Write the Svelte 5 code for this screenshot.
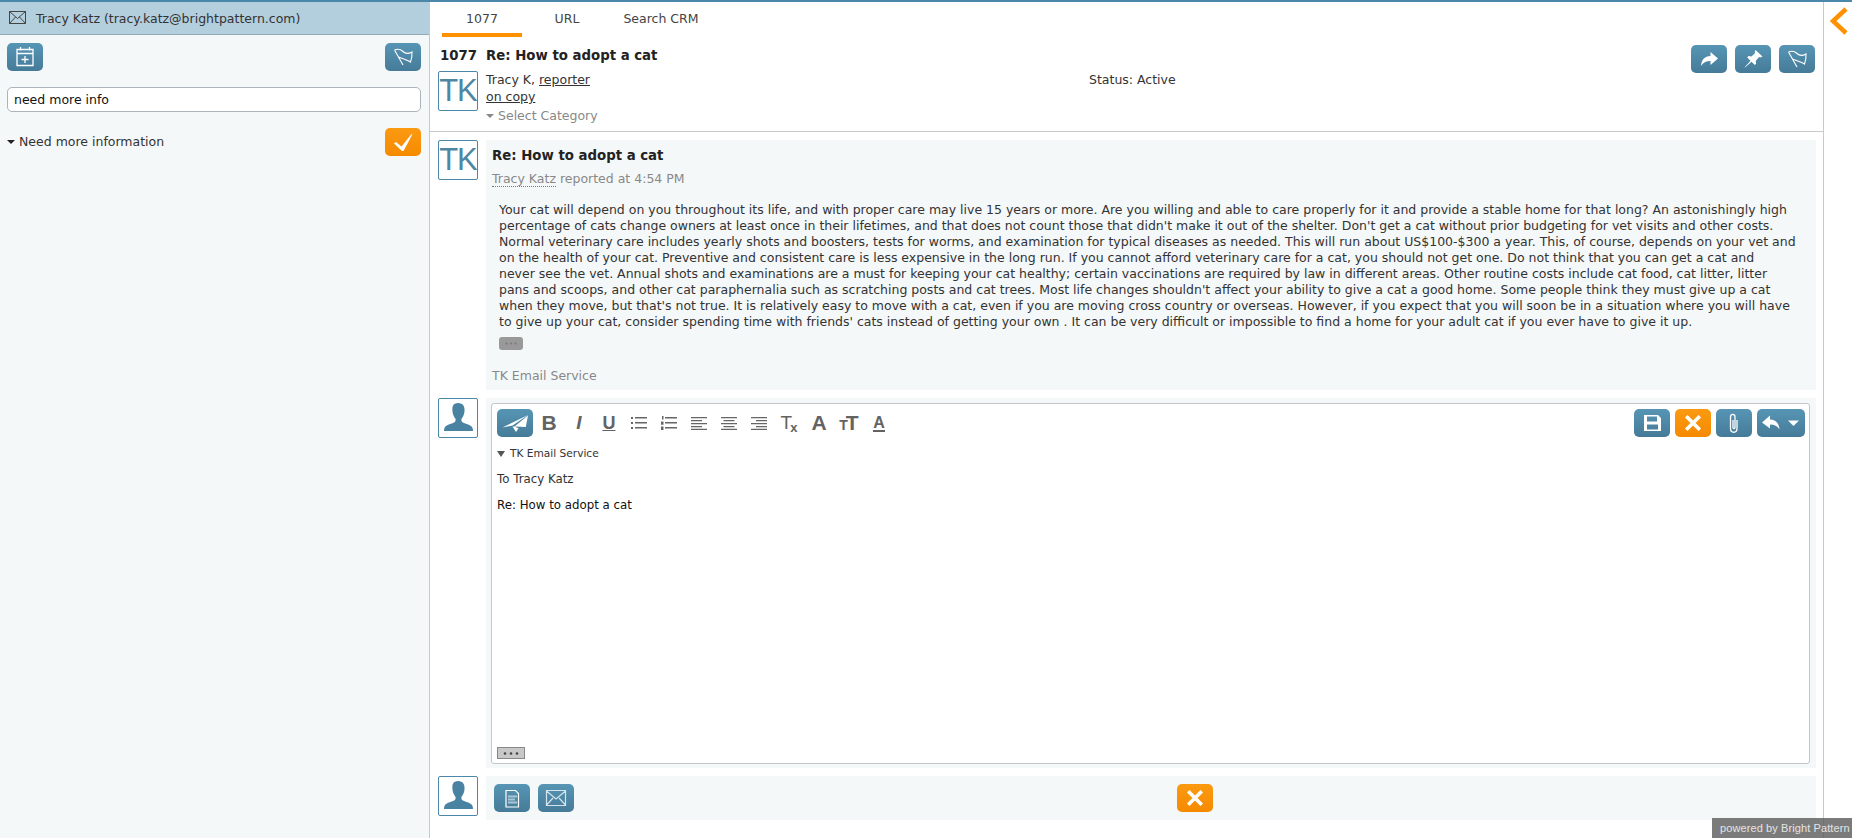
<script>
	const bodyLines = [
		'Your cat will depend on you throughout its life, and with proper care may live 15 years or more. Are you willing and able to care properly for it and provide a stable home for that long? An astonishingly high',
		"percentage of cats change owners at least once in their lifetimes, and that does not count those that didn't make it out of the shelter. Don't get a cat without prior budgeting for vet visits and other costs.",
		'Normal veterinary care includes yearly shots and boosters, tests for worms, and examination for typical diseases as needed. This will run about US$100-$300 a year. This, of course, depends on your vet and',
		'on the health of your cat. Preventive and consistent care is less expensive in the long run. If you cannot afford veterinary care for a cat, you should not get one. Do not think that you can get a cat and',
		'never see the vet. Annual shots and examinations are a must for keeping your cat healthy; certain vaccinations are required by law in different areas. Other routine costs include cat food, cat litter, litter',
		"pans and scoops, and other cat paraphernalia such as scratching posts and cat trees. Most life changes shouldn't affect your ability to give a cat a good home. Some people think they must give up a cat",
		"when they move, but that's not true. It is relatively easy to move with a cat, even if you are moving cross country or overseas. However, if you expect that you will soon be in a situation where you will have",
		"to give up your cat, consider spending time with friends' cats instead of getting your own . It can be very difficult or impossible to find a home for your adult cat if you ever have to give it up."
	];
</script>

{#snippet flag()}
	<svg width="36" height="28" viewBox="0 0 36 28" fill="none" stroke="#fff" stroke-width="1.100">
		<path d="M9.500 7 18 22M9.500 7C13 5.500 16 6.500 18 8.500c2 2 5.500 2.500 9 .5 .2 3.500-.3 7-1.500 10-2.500-2-6-2.500-12-5" />
	</svg>
{/snippet}

{#snippet person()}
	<div class="avatar">
		<svg width="38" height="38" viewBox="0 0 38 38" fill="#4a83a2">
			<path d="M19 4c5 0 7 3.500 6.500 8.500-.3 3-1.500 5.500-2.800 7-.6 1.500-.4 3 .8 3.800 2 1.300 8 2.500 9.500 4.700.8 1.200 1 2.500 1 4H5c0-1.500.2-2.800 1-4 1.500-2.200 7.500-3.400 9.500-4.700 1.200-.8 1.400-2.300.8-3.800-1.300-1.500-2.500-4-2.800-7C13 7.500 14 4 19 4z" />
		</svg>
	</div>
{/snippet}

{#snippet closeIcon()}
	<svg width="36" height="28" viewBox="0 0 36 28" stroke="#fff" stroke-width="3.600" stroke-linecap="square">
		<path d="M12.500 8.500 23.500 19.500M23.500 8.500 12.500 19.500" />
	</svg>
{/snippet}

<div class="app">
	<aside class="left">
		<div class="left-head">
			<svg width="18" height="14" viewBox="0 0 18 14" fill="none" stroke="#444" stroke-width="1">
				<path d="M.5.500h16v12H.500zM.5.500l8 7 8-7M.5 12.500l6-6.500M16.500 12.500l-6-6.500" />
			</svg>
			<span>Tracy Katz (tracy.katz@brightpattern.com)</span>
		</div>
		<div class="left-tools">
			<button class="btn">
				<svg width="36" height="28" viewBox="0 0 36 28" fill="none" stroke="#fff" stroke-width="1.300">
					<path d="M10 6.500h16v16H10zM10 10.500h16M13.500 4v3.500M22.500 4v3.500M18 13v7M14.500 16.500h7" />
				</svg>
			</button>
			<button class="btn">{@render flag()}</button>
		</div>
		<input class="search" value="need more info" />
		<div class="result">
			<span class="result-name"><i class="caret dark"></i>Need more information</span>
			<button class="btn orange">
				<svg width="36" height="28" viewBox="0 0 36 28" fill="#fff">
					<path d="M9 15.500l2-1.500 5.500 4.500L26.500 6l.8.6L18.500 23h-1.500z" />
				</svg>
			</button>
		</div>
	</aside>

	<main class="main">
		<nav class="tabs">
			<span class="tab active">1077</span>
			<span class="tab">URL</span>
			<span class="tab wide">Search CRM</span>
		</nav>

		<header class="head">
			<div class="head-main">
				<h1 class="case-title"><span class="case-no">1077</span>Re: How to adopt a cat</h1>
				<div class="head-row">
					<div class="avatar tk">TK</div>
					<div class="people">
						<div>Tracy K, <u>reporter</u></div>
						<div><u>on copy</u></div>
						<div class="category"><i class="caret"></i>Select Category</div>
					</div>
					<div class="status">Status: Active</div>
				</div>
			</div>
			<div class="head-actions">
				<button class="btn">
					<svg width="36" height="28" viewBox="0 0 36 28" fill="#fff">
						<path d="M27 13.500 19.500 7v4c-6 .3-9 3.800-9.500 10 2-3.500 5-5 9.500-5v4z" />
					</svg>
				</button>
				<button class="btn">
					<svg width="36" height="28" viewBox="0 0 36 28" fill="#fff">
						<path d="M20.500 5 27.500 11.500l-2.200 1-1.200-.4-3.300 3.600.3 3-1.300 1.300-3.300-3.300-6.500 5.800-.3-.3 5.800-6.500-3.300-3.300 1.300-1.300 3 .3 3.600-3.300-.4-1.200z" />
					</svg>
				</button>
				<button class="btn">{@render flag()}</button>
			</div>
		</header>

		<section class="thread">
			<div class="item">
				<div class="avatar tk">TK</div>
				<article class="message">
					<h2>Re: How to adopt a cat</h2>
					<div class="byline"><span class="dotted">Tracy Katz</span> reported at 4:54 PM</div>
					<div class="body">
						{#each bodyLines as line}
							<div>{line}</div>
						{/each}
					</div>
					<div class="more">
						<svg width="12" height="3" viewBox="0 0 12 3" fill="#777">
							<circle cx="1.500" cy="1.500" r="1" /><circle cx="6" cy="1.500" r="1" /><circle cx="10.500" cy="1.500" r="1" />
						</svg>
					</div>
					<div class="service">TK Email Service</div>
				</article>
			</div>

			<div class="item">
				{@render person()}
				<div class="compose">
					<div class="editor">
						<div class="toolbar">
							<button class="btn">
								<svg width="36" height="28" viewBox="0 0 36 28" fill="#fff">
									<path d="M5.500 18.500 31 6 15.500 16.500zM17.500 17.500 31 6.500 28.800 18zM15.500 17.500l3.500 5.500 2.500-3.700-4-1.800z" />
								</svg>
							</button>
							<div class="fmt">
								<span class="f"><b class="g-b">B</b></span>
								<span class="f"><em class="g-i">I</em></span>
								<span class="f"><span class="g-u">U</span></span>
								<span class="f">
									<svg width="16" height="14" viewBox="0 0 16 14" fill="#666">
										<path d="M0 1h2v2H0zM4 1h12v1.500H4zM0 6h2v2H0zM4 6h12v1.500H4zM0 11h2v2H0zM4 11h12v1.500H4z" />
									</svg>
								</span>
								<span class="f">
									<svg width="16" height="14" viewBox="0 0 16 14" fill="#666">
										<path d="M1 0h1.500v3.500H1zM0 5.500h2.500v3.200H0zM0 10.500h2.500V14H0zM4 1h12v1.500H4zM4 6h12v1.500H4zM4 11h12v1.500H4z" />
									</svg>
								</span>
								<span class="f">
									<svg width="16" height="14" viewBox="0 0 16 14" fill="#666">
										<path d="M0 1h16v1.300H0zM0 4h11v1.300H0zM0 7h16v1.300H0zM0 10h11v1.300H0zM0 12.700h16V14H0z" />
									</svg>
								</span>
								<span class="f">
									<svg width="16" height="14" viewBox="0 0 16 14" fill="#666">
										<path d="M0 1h16v1.300H0zM2.500 4h11v1.300h-11zM0 7h16v1.300H0zM2.500 10h11v1.300h-11zM0 12.700h16V14H0z" />
									</svg>
								</span>
								<span class="f">
									<svg width="16" height="14" viewBox="0 0 16 14" fill="#666">
										<path d="M0 1h16v1.300H0zM5 4h11v1.300H5zM0 7h16v1.300H0zM5 10h11v1.300H5zM0 12.700h16V14H0z" />
									</svg>
								</span>
								<span class="f"><span class="g-t">T<sub>x</sub></span></span>
								<span class="f"><b class="g-a">A</b></span>
								<span class="f"><span class="g-tt"><small>T</small>T</span></span>
								<span class="f"><span class="g-ac">A</span></span>
							</div>
							<div class="editor-actions">
								<button class="btn">
									<svg width="36" height="28" viewBox="0 0 36 28" fill="#fff">
										<path fill-rule="evenodd" d="M10 6h14l3 3v13H10zM13 7.500v5h10v-5zM13 15.500v5h11v-5z" />
									</svg>
								</button>
								<button class="btn orange">{@render closeIcon()}</button>
								<button class="btn">
									<svg width="36" height="28" viewBox="0 0 36 28" fill="none" stroke="#fff" stroke-width="1.300">
										<path d="M21 11v8.500c0 5-6.500 5-6.500 0V8c0-3.500 4.500-3.500 4.500 0v10.500c0 1.500-2 1.500-2 0V11" />
									</svg>
								</button>
								<button class="btn reply">
									<svg width="48" height="28" viewBox="0 0 48 28" fill="#fff">
										<path d="M5 13.500 13 6.500v4c6 .3 9 3.800 9.500 10-2-3.500-5-5-9.500-5v4zM31 11.500h11l-5.500 5.500z" />
									</svg>
								</button>
							</div>
						</div>
						<div class="from"><i class="caret large"></i>TK Email Service</div>
						<div class="to">To Tracy Katz</div>
						<div class="subject">Re: How to adopt a cat</div>
						<div class="editor-spacer"></div>
						<div class="quote-toggle">
							<svg width="16" height="3" viewBox="0 0 16 3" fill="#444">
								<circle cx="2" cy="1.500" r="1.300" /><circle cx="8" cy="1.500" r="1.300" /><circle cx="14" cy="1.500" r="1.300" />
							</svg>
						</div>
					</div>
				</div>
			</div>

			<div class="item">
				{@render person()}
				<div class="footer-bar">
					<div class="footer-left">
						<button class="btn">
							<svg width="36" height="28" viewBox="0 0 36 28" fill="none" stroke="#fff" stroke-width="1.200">
								<path d="M12 6.500h9.500l3 3v13.500H12z" />
								<path d="M14 11.500h9v2h-9zM14 14.500h7v2h-7zM14 17.500h9v2h-9z" fill="#a9c8d8" stroke="none" />
							</svg>
						</button>
						<button class="btn">
							<svg width="36" height="28" viewBox="0 0 36 28" fill="none" stroke="#d5e4ec" stroke-width="1.200">
								<path d="M8.500 6.500h19v15h-19zM8.500 7l9.500 8 9.500-8M8.500 21l6.500-7M27.500 21 21 14" />
							</svg>
						</button>
					</div>
					<button class="btn orange cancel">{@render closeIcon()}</button>
				</div>
			</div>
		</section>
	</main>

	<aside class="rail">
		<svg width="18" height="28" viewBox="0 0 18 28" fill="none" stroke="#ff9000" stroke-width="4.500">
			<path d="M16 2 3 14l13 12" />
		</svg>
	</aside>

	<div class="powered">powered by Bright Pattern</div>
</div>

<style>
	:global(body) {
		background: #fff;
		color: #333;
		font-family: 'DejaVu Sans', sans-serif;
	}
	.app {
		display: flex;
		height: 838px;
		box-sizing: border-box;
		border-top: 2px solid #4a87a8;
		overflow: hidden;
		position: relative;
		font-size: 12.500px;
	}
	.btn {
		display: block;
		width: 36px;
		height: 28px;
		padding: 0;
		border: 0;
		border-radius: 5px;
		background: linear-gradient(#5795b5, #457b98);
		flex: none;
	}
	.btn svg {
		display: block;
	}
	.btn.orange {
		background: linear-gradient(#fb9a12, #f58a00);
	}
	.caret {
		display: inline-block;
		width: 0;
		height: 0;
		border: 4px solid transparent;
		border-top: 4px solid #888;
		border-bottom: 0;
		margin-right: 4px;
		vertical-align: 2px;
	}
	.caret.dark {
		border-top-color: #222;
	}
	.caret.large {
		border-width: 4px;
		border-top: 6px solid #555;
		border-bottom: 0;
		margin-right: 5px;
		vertical-align: 0;
	}

	.left {
		flex: none;
		box-sizing: border-box;
		border-right: 1px solid #c9c9c9;
		width: 430px;
		background: #f5f8f9;
	}
	.left-head {
		height: 33px;
		box-sizing: border-box;
		display: flex;
		align-items: center;
		gap: 9px;
		padding-left: 9px;
		background: #b3cedd;
		border-bottom: 1px solid #94a9b6;
		white-space: nowrap;
	}
	.left-tools {
		display: flex;
		justify-content: space-between;
		padding: 8px 8px 0 7px;
	}
	.search {
		display: block;
		box-sizing: border-box;
		width: 414px;
		height: 25px;
		margin: 16px 0 0 7px;
		padding: 0 6px;
		border: 1px solid #aab4ba;
		border-radius: 5px;
		background: #fff;
		color: #111;
		font: inherit;
	}
	.result {
		display: flex;
		justify-content: space-between;
		padding: 16px 8px 0 7px;
	}
	.result-name {
		padding-top: 6px;
	}

	.main {
		flex: 1;
		min-width: 0;
	}
	.tabs {
		display: flex;
		height: 35px;
		box-sizing: border-box;
		padding-left: 12px;
	}
	.tab {
		width: 80px;
		text-align: center;
		padding-top: 9px;
		color: #444;
	}
	.tab.wide {
		width: 104px;
		margin-left: 2px;
	}
	.tab.active {
		border-bottom: 4px solid #ff9000;
		margin-right: 5px;
	}
	.head {
		display: flex;
		height: 95px;
		box-sizing: border-box;
		border-bottom: 1px solid #c9c9c9;
		padding-right: 8px;
	}
	.head-main {
		flex: 1;
	}
	.case-title {
		margin: 0;
		height: 34px;
		box-sizing: border-box;
		padding: 11px 0 0 10px;
		font-size: 13.300px;
		line-height: 16px;
		color: #222;
		white-space: nowrap;
	}
	.case-no {
		display: inline-block;
		width: 46px;
	}
	.head-row {
		display: flex;
		padding-left: 8px;
	}
	.avatar {
		width: 40px;
		height: 40px;
		box-sizing: border-box;
		flex: none;
		border: 1px solid #4a87a8;
		border-radius: 2px;
		background: #fff;
		overflow: hidden;
	}
	.avatar.tk {
		font-family: 'Liberation Sans', sans-serif;
		font-size: 31px;
		line-height: 38px;
		letter-spacing: -1px;
		text-align: center;
		color: #4f87a3;
	}
	.people {
		width: 603px;
		padding-left: 8px;
		line-height: 17px;
	}
	.category {
		margin-top: 2px;
		color: #888;
	}
	.status {
		line-height: 17px;
	}
	.head-actions {
		display: flex;
		gap: 8px;
		padding-top: 8px;
	}

	.thread {
		padding: 8px 7px 0 8px;
	}
	.item {
		display: flex;
		gap: 8px;
		margin-bottom: 8px;
	}
	.message {
		flex: 1;
		height: 250px;
		box-sizing: border-box;
		padding: 7px 6px 0;
		background: #f5f8f9;
	}
	.message h2 {
		margin: 0;
		font-size: 13.300px;
		line-height: 18px;
		color: #222;
	}
	.byline {
		margin-top: 6px;
		line-height: 16px;
		color: #888;
	}
	.dotted {
		border-bottom: 1px dotted #777;
	}
	.body {
		margin: 15px 0 0 7px;
		line-height: 16px;
		white-space: nowrap;
	}
	.more {
		display: flex;
		align-items: center;
		justify-content: center;
		width: 24px;
		height: 13px;
		margin: 7px 0 0 7px;
		border-radius: 3px;
		background: #999;
	}
	.service {
		margin-top: 18px;
		line-height: 16px;
		color: #888;
	}
	.compose {
		flex: 1;
		height: 370px;
		box-sizing: border-box;
		padding: 5px 6px 4px 5px;
		background: #f5f8f9;
	}
	.editor {
		height: 100%;
		box-sizing: border-box;
		display: flex;
		flex-direction: column;
		border: 1px solid #c3c7cb;
		border-radius: 3px;
		background: #fff;
		padding: 5px 4px 4px 5px;
	}
	.toolbar {
		display: flex;
		align-items: center;
	}
	.fmt {
		display: flex;
		flex: 1;
		margin-left: 1px;
		color: #636363;
	}
	.f {
		display: flex;
		align-items: center;
		justify-content: center;
		width: 30px;
		height: 28px;
		font-family: 'Liberation Sans', sans-serif;
	}
	.g-b {
		font-size: 21px;
	}
	.g-i {
		font-size: 19px;
		font-weight: 700;
	}
	.g-u {
		font-size: 18px;
		font-weight: 700;
		text-decoration: underline;
	}
	.g-t {
		font-size: 19px;
	}
	.g-t sub {
		font-size: 13px;
		font-weight: 700;
		vertical-align: -3px;
		margin-left: -2px;
	}
	.g-a {
		font-size: 21px;
	}
	.g-tt {
		font-size: 21px;
		font-weight: 700;
	}
	.g-tt small {
		font-size: 14px;
		margin-right: -2px;
	}
	.g-ac {
		font-size: 16px;
		font-weight: 700;
		border-bottom: 2px solid #636363;
		line-height: 15px;
	}
	.editor-actions {
		display: flex;
		gap: 5px;
	}
	.btn.reply {
		width: 48px;
	}
	.from {
		margin-top: 8px;
		font-size: 10.600px;
		line-height: 16px;
		color: #333;
	}
	.to {
		margin-top: 10px;
		font-size: 11.800px;
		line-height: 16px;
	}
	.subject {
		margin-top: 10px;
		font-size: 11.800px;
		line-height: 16px;
		color: #111;
	}
	.editor-spacer {
		flex: 1;
	}
	.quote-toggle {
		display: flex;
		align-items: center;
		justify-content: center;
		width: 28px;
		height: 12px;
		box-sizing: border-box;
		border: 1px solid #888;
		background: #c8c8c8;
	}
	.footer-bar {
		flex: 1;
		height: 44px;
		box-sizing: border-box;
		display: flex;
		position: relative;
		padding: 8px;
		background: #f5f8f9;
	}
	.footer-left {
		display: flex;
		gap: 8px;
	}
	.cancel {
		margin-left: 603px;
	}

	.rail {
		width: 29px;
		flex: none;
		box-sizing: border-box;
		border-left: 1px solid #c9c9c9;
		padding: 5px 0 0 6px;
	}
	.powered {
		position: absolute;
		right: 0;
		bottom: 0;
		width: 140px;
		height: 20px;
		box-sizing: border-box;
		padding-left: 8px;
		background: rgba(90, 90, 90, 0.8);
		color: #e4e4e4;
		font: 11px/20px 'Liberation Sans', sans-serif;
		letter-spacing: 0.1px;
		white-space: nowrap;
	}
</style>
